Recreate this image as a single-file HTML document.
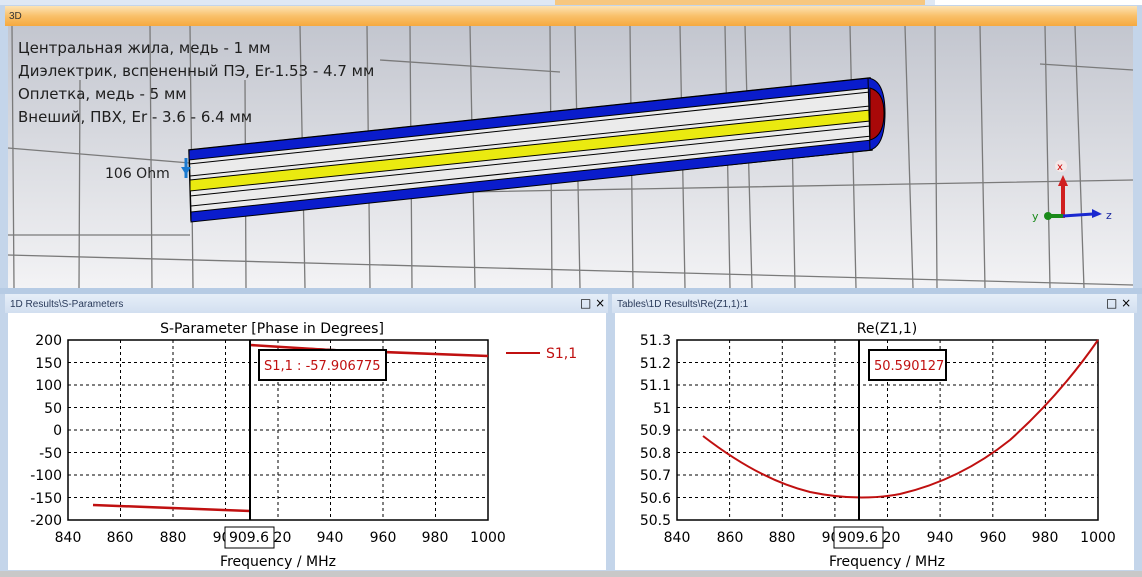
<!DOCTYPE html>
<html><head><meta charset="utf-8"><style>
body{margin:0;width:1142px;height:577px;overflow:hidden;background:#c4d5ea;font-family:"DejaVu Sans",sans-serif}
svg{display:block}
</style></head><body>
<svg width="1142" height="577" viewBox="0 0 1142 577" font-family="DejaVu Sans, sans-serif">
<defs>
<linearGradient id="hd" x1="0" y1="0" x2="0" y2="1"><stop offset="0" stop-color="#fde3b4"/><stop offset="0.5" stop-color="#f9c06a"/><stop offset="1" stop-color="#f6a93f"/></linearGradient>
<linearGradient id="vp" x1="0" y1="0" x2="0" y2="1"><stop offset="0" stop-color="#c3c6cf"/><stop offset="1" stop-color="#f3f3f5"/></linearGradient>
<linearGradient id="ph" x1="0" y1="0" x2="0" y2="1"><stop offset="0" stop-color="#e6eef8"/><stop offset="1" stop-color="#d2dff0"/></linearGradient>
</defs>
<rect width="1142" height="577" fill="#c4d5ea"/>
<rect x="0" y="0" width="1142" height="5" fill="#dfe8f4"/>
<rect x="555" y="0" width="370" height="5" fill="#f7c77f"/>
<rect x="935" y="0" width="207" height="5" fill="#fff"/>
<rect x="5" y="6" width="1132" height="20" fill="url(#hd)"/>
<text x="9" y="19" font-size="10" fill="#333" font-family="Liberation Sans, sans-serif">3D</text>
<rect x="8" y="26" width="1125" height="262" fill="url(#vp)"/>
<g stroke="#7a7a7a" stroke-width="1.3" fill="none">
<path d="M12 26 L14 288 M190 26 L193 288 M367 26 L370 288 M550 26 L552 288 M725 26 L730 288 M905 26 L913 288 M1075 26 L1084 288"/>
<path d="M80 80 L79 288 M245 80 L246 288 M410 26 L412 288 M575 26 L580 288 M745 26 L752 288 M935 26 L937 288 M1045 26 L1050 288 M850 26 L856 288 M680 26 L685 288 M150 26 L152 288 M300 26 L305 288 M470 26 L475 288 M630 26 L633 288 M790 26 L795 288 M980 26 L985 288"/>
<path d="M8 148 L190 163 M190 197 L1133 180 M8 255 L1133 285 M8 235 L190 235 M1040 64 L1133 70 M380 60 L560 72"/>
</g>
<polygon points="189,150 870,78 872,150 191,220" fill="#ebebeb" stroke="#000" stroke-width="1.5"/>
<polygon points="189,150 870,78 870,88 189,160" fill="#0a1ccc" stroke="#000" stroke-width="1"/>
<polygon points="191,212 872,140 872,150 191,222" fill="#0a1ccc" stroke="#000" stroke-width="1"/>
<polygon points="190,180 870,110 870,121 190,191" fill="#eaea10" stroke="#000" stroke-width="1"/>
<g stroke="#000" stroke-width="1" fill="none"><path d="M189 164 L870 92 M190 176 L870 106 M190 196 L870 126 M191 206 L872 136"/></g>
<path d="M868 78 Q885 80 885 113 Q885 146 870 150 Z" fill="#0a1ccc" stroke="#000" stroke-width="1"/>
<path d="M870 88 Q884 92 884 113 Q884 136 870 140 Z" fill="#a80808" stroke="#000" stroke-width="1"/>
<path d="M186 158 L186 178" stroke="#1a7ad0" stroke-width="3"/>
<path d="M181 167 L191 167 L186 175 Z" fill="#1a7ad0"/>
<text x="105" y="178" font-size="14" fill="#222">106 Ohm</text>
<g font-size="15" fill="#1e1e1e">
<text x="18" y="53">Центральная жила, медь - 1 мм</text>
<text x="18" y="76">Диэлектрик, вспененный ПЭ, Er-1.53  - 4.7 мм</text>
<text x="18" y="99">Оплетка, медь - 5 мм</text>
<text x="18" y="122">Внеший, ПВХ, Er - 3.6  - 6.4 мм</text>
</g>
<circle cx="1061" cy="166" r="6" fill="#f4e8e8"/><text x="1057" y="170" font-size="10" fill="#c00">x</text>
<path d="M1063 218 L1063 184" stroke="#d02020" stroke-width="4"/><path d="M1058 186 L1063 175 L1068 186 Z" fill="#d02020"/>
<path d="M1063 216 L1093 214" stroke="#1a28d0" stroke-width="3"/><path d="M1092 209 L1102 214 L1092 218 Z" fill="#1a28d0"/>
<path d="M1047 216 L1063 216" stroke="#1a8a1a" stroke-width="4"/><circle cx="1048" cy="216" r="4" fill="#1a8a1a"/>
<text x="1032" y="220" font-size="11" fill="#1a8a1a">y</text><text x="1106" y="219" font-size="11" fill="#1a28a0">z</text>
<rect x="0" y="288" width="1142" height="6" fill="#b6cbe4"/>
<rect x="5" y="294" width="603" height="19" fill="url(#ph)"/>
<text x="10" y="307" font-size="10" fill="#2a3a5a" font-family="Liberation Sans, sans-serif">1D Results\S-Parameters</text>
<text x="580" y="307" font-size="12" fill="#000">□ ×</text>
<rect x="8" y="313" width="598" height="257" fill="#fff"/>
<rect x="612" y="294" width="525" height="19" fill="url(#ph)"/>
<text x="617" y="307" font-size="10" fill="#2a3a5a" font-family="Liberation Sans, sans-serif">Tables\1D Results\Re(Z1,1):1</text>
<text x="1106" y="307" font-size="12" fill="#000">□ ×</text>
<rect x="615" y="313" width="519" height="257" fill="#fff"/>
<rect x="0" y="571" width="1142" height="6" fill="#c8c8c8"/>
<g stroke="#000" stroke-width="1" stroke-dasharray="3,3" fill="none">
<path d="M68 362.5H488M68 385H488M68 407.5H488M68 430H488M68 452.5H488M68 475H488M68 497.5H488"/>
<path d="M120.5 340V520M173 340V520M225.5 340V520M278 340V520M330.5 340V520M383 340V520M435.5 340V520"/>
</g>
<rect x="68" y="340" width="420" height="180" fill="none" stroke="#000" stroke-width="1.5"/>
<path d="M93 505 L250 511" stroke="#c01010" stroke-width="2.5"/>
<path d="M250 345 L330 350 L488 356" stroke="#c01010" stroke-width="2.5"/>
<path d="M250 340V520" stroke="#000" stroke-width="2"/>
<path d="M506 353H540" stroke="#c01010" stroke-width="2"/>
<text x="546" y="358" font-size="14" fill="#c01010">S1,1</text>
<rect x="259" y="350" width="127" height="30" fill="#fff" stroke="#000" stroke-width="2"/>
<text x="264" y="370" font-size="13" fill="#c01010">S1,1 : -57.906775</text>
<text x="272" y="333" font-size="14" text-anchor="middle" fill="#000">S-Parameter [Phase in Degrees]</text>
<g font-size="14" fill="#000" text-anchor="end">
<text x="62" y="345">200</text><text x="62" y="368">150</text><text x="62" y="390">100</text><text x="62" y="413">50</text><text x="62" y="435">0</text><text x="62" y="458">-50</text><text x="62" y="480">-100</text><text x="62" y="503">-150</text><text x="62" y="525">-200</text>
</g>
<g font-size="14" fill="#000" text-anchor="middle">
<text x="68" y="542">840</text><text x="120" y="542">860</text><text x="173" y="542">880</text><text x="226" y="542">900</text><text x="278" y="542">920</text><text x="330" y="542">940</text><text x="383" y="542">960</text><text x="435" y="542">980</text><text x="488" y="542">1000</text>
<text x="278" y="566">Frequency / MHz</text>
</g>
<rect x="225" y="527" width="49" height="21" fill="#fff" stroke="#000"/>
<text x="249" y="542" font-size="14" text-anchor="middle">909.6</text>
<g stroke="#000" stroke-width="1" stroke-dasharray="3,3" fill="none">
<path d="M677 362.5H1098M677 385H1098M677 407.5H1098M677 430H1098M677 452.5H1098M677 475H1098M677 497.5H1098"/>
<path d="M729.6 340V520M782.3 340V520M834.9 340V520M887.5 340V520M940.1 340V520M992.8 340V520M1045.4 340V520"/>
</g>
<rect x="677" y="340" width="421" height="180" fill="none" stroke="#000" stroke-width="1.5"/>
<path d="M703 436 Q760 480 810 492 Q858 502 900 494 Q960 480 1010 440 Q1060 395 1098 340" stroke="#c01010" stroke-width="2" fill="none"/>
<path d="M859 340V520" stroke="#000" stroke-width="2"/>
<rect x="869" y="350" width="77" height="30" fill="#fff" stroke="#000" stroke-width="2"/>
<text x="874" y="370" font-size="13" fill="#c01010">50.590127</text>
<text x="887" y="333" font-size="14" text-anchor="middle">Re(Z1,1)</text>
<g font-size="14" fill="#000" text-anchor="end">
<text x="671" y="345">51.3</text><text x="671" y="368">51.2</text><text x="671" y="390">51.1</text><text x="671" y="413">51</text><text x="671" y="435">50.9</text><text x="671" y="458">50.8</text><text x="671" y="480">50.7</text><text x="671" y="503">50.6</text><text x="671" y="525">50.5</text>
</g>
<g font-size="14" fill="#000" text-anchor="middle">
<text x="677" y="542">840</text><text x="730" y="542">860</text><text x="782" y="542">880</text><text x="835" y="542">900</text><text x="887" y="542">920</text><text x="940" y="542">940</text><text x="993" y="542">960</text><text x="1045" y="542">980</text><text x="1098" y="542">1000</text>
<text x="887" y="566">Frequency / MHz</text>
</g>
<rect x="834" y="527" width="49" height="21" fill="#fff" stroke="#000"/>
<text x="858" y="542" font-size="14" text-anchor="middle">909.6</text>
</svg>
</body></html>
